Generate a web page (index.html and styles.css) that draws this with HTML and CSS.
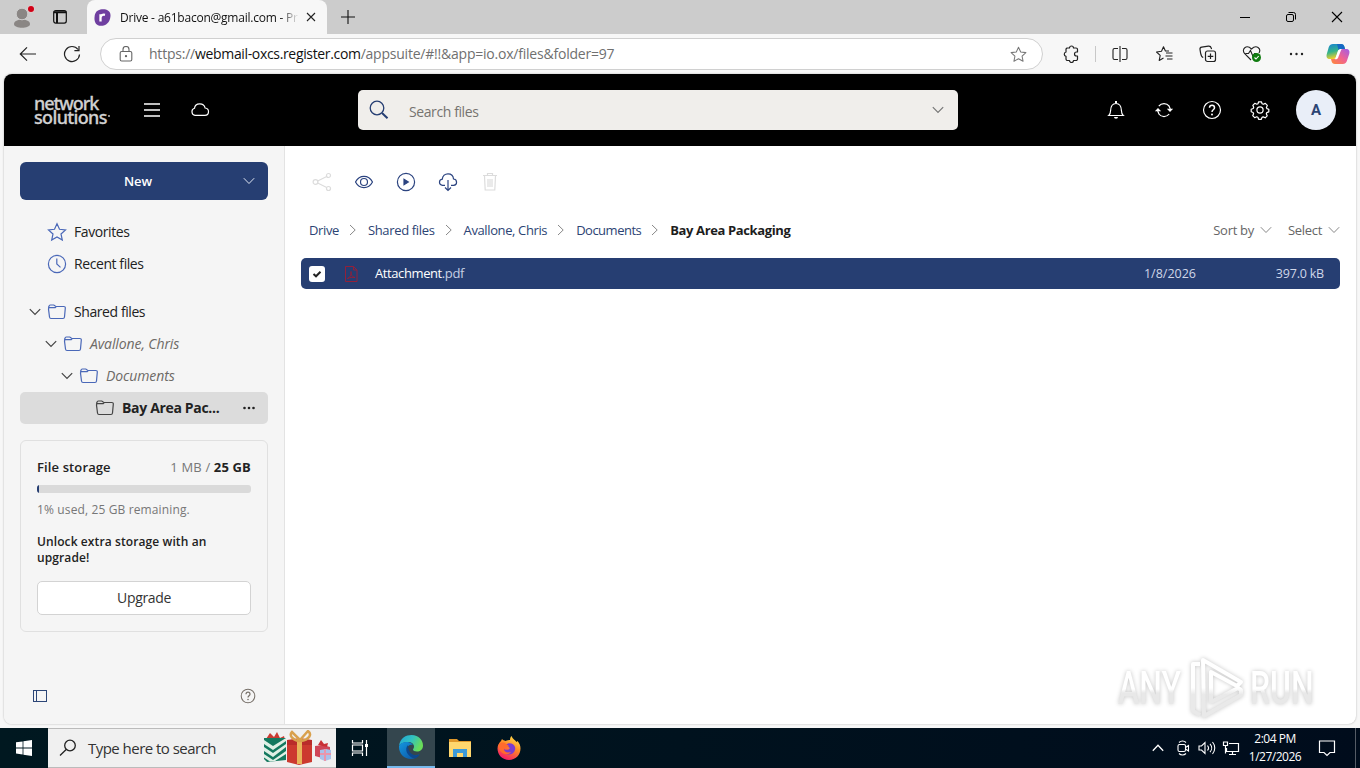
FILE: index.html
```html
<!DOCTYPE html>
<html lang="en">
<head>
<meta charset="utf-8">
<title>Drive</title>
<link rel="stylesheet" href="styles.css">
</head>
<body>
<svg class="defs" width="0" height="0">
  <symbol id="folder" viewBox="0 0 20 20"><path d="M1.500 6L2 4.200c.1-.8.600-1.200 1.300-1.200h3.500l2 1.500h8c1 0 1.600.7 1.500 1.600L17.500 15c-.1 1-.7 1.500-1.500 1.500H4c-.9 0-1.400-.5-1.500-1.500L1.500 7.200C1.400 6.200 1.900 5.700 2.700 5.700h5.500l1-1.200"/></symbol>
  <symbol id="down" viewBox="0 0 12 8"><path d="M.8 1.200L6 6.500l5.200-5.300"/></symbol>
  <symbol id="right" viewBox="0 0 8 12"><path d="M1 1l5.200 5L1 11"/></symbol>
</svg>
<div class="tabstrip">
  <svg class="profile" width="34" height="34" viewBox="0 0 34 34"><path d="M8 24c0-6 16-6 16 0 0 5-16 5-16 0z" fill="#8a8684"/><circle cx="16" cy="14" r="5.800" fill="#8a8684" stroke="#ccc"/><circle cx="25" cy="9" r="3.6" fill="#e9c9c9"/><circle cx="25" cy="9" r="3" fill="#d00016"/></svg>
  <svg class="workspaces" width="14" height="14" viewBox="0 0 14 14" fill="none" stroke="#111" stroke-width="1.2"><rect x=".7" y=".7" width="12.6" height="12.4" rx="2"/><path d="M.7 2.3h12.6M4 3v10" stroke-width="2"/></svg>
  <div class="tab">
    <svg width="17" height="17" viewBox="0 0 17 17"><path d="M4 1.5C8-.8 17-.4 16.500 7c-.4 6.500-4.500 9.800-9.500 9.800C2 16.800.2 13 .5 8.500.7 5 1.700 2.700 4 1.500z" fill="#6f3fa0"/><path d="M6.500 12.500V5.200M6.500 8.500C7 6.200 8.700 5.200 11 5.800" fill="none" stroke="#fff" stroke-width="2.300"/></svg>
    <span class="tab-title">Drive - a61bacon@gmail.com - Pr</span>
    <svg width="10" height="10" viewBox="0 0 10 10" fill="none" stroke="#222" stroke-width="1.100"><path d="M1 1l8 8M9 1L1 9"/></svg>
  </div>
  <svg class="newtab" width="14" height="14" viewBox="0 0 14 14" stroke="#111" stroke-width="1.100"><path d="M7 0v14M0 7h14"/></svg>
  <div class="window-buttons">
    <svg width="12" height="12" viewBox="0 0 12 12" stroke="#000"><path d="M1 6.500h10"/></svg>
    <svg width="12" height="12" viewBox="0 0 12 12" fill="none" stroke="#000"><rect x="1.500" y="3.500" width="7" height="7" rx="1.500"/><path d="M3.500 1.500H8.500a2 2 0 0 1 2 2V8.500"/></svg>
    <svg width="12" height="12" viewBox="0 0 12 12" stroke="#000" stroke-width="1.100"><path d="M1 1l10 10M11 1L1 11"/></svg>
  </div>
</div>

<div class="toolbar">
  <svg class="back" width="18" height="16" viewBox="0 0 18 16" fill="none" stroke="#222" stroke-width="1.200"><path d="M17 8H1.500M8 1.300L1.300 8 8 14.700"/></svg>
  <svg class="reload" width="18" height="18" viewBox="0 0 18 18" fill="none" stroke="#222" stroke-width="1.200"><path d="M16.500 9.500A7.500 7.500 0 1 1 15 4.500M16 1v4.600h-4.600"/></svg>
  <div class="address">
    <svg width="14" height="16" viewBox="0 0 14 16" fill="none" stroke="#666" stroke-width="1.100"><rect x="1.200" y="5.500" width="11.600" height="9.500" rx="1.500"/><path d="M4 5.500V3.500a3 3 0 0 1 6 0v2"/><circle cx="7" cy="10.200" r=".6" fill="#666"/></svg>
    <span class="url">https://<b>webmail-oxcs.register.com</b>/appsuite/#!!&amp;app=io.ox/files&amp;folder=97</span>
    <svg class="fav" width="17" height="17" viewBox="0 0 20 20" fill="none" stroke="#777" stroke-width="1.200" stroke-linejoin="round"><path d="M10 1.500l2.600 5.600 6.100.7-4.500 4.200 1.200 6L10 15l-5.400 3 1.200-6L1.300 7.800l6.100-.7z"/></svg>
  </div>
  <div class="browser-actions">
    <svg width="18" height="18" viewBox="0 0 18 18" fill="none" stroke="#222" stroke-width="1.200" stroke-linejoin="round"><path d="M5 3h2.500a2 2 0 0 1 4 0H14a1.500 1.500 0 0 1 1.500 1.500V7h-1a1.900 1.900 0 0 0 0 4h1v3a1.500 1.500 0 0 1-1.500 1.500h-2.500a2 2 0 0 1-4 0H5.500A1.500 1.500 0 0 1 4 14v-2.700a2.200 2.200 0 0 1 0-4.300V4z"/></svg>
    <i class="divider"></i>
    <svg width="18" height="18" viewBox="0 0 18 18" fill="none" stroke="#222" stroke-width="1.100"><path d="M7 3.500H3.500a1.500 1.500 0 0 0-1.500 1.500v8a1.500 1.500 0 0 0 1.500 1.500H7M11 3.500h3.500A1.500 1.500 0 0 1 16 5v8a1.500 1.500 0 0 1-1.500 1.500H11M9 1v16"/></svg>
    <svg width="18" height="18" viewBox="0 0 18 18" fill="none" stroke="#222" stroke-width="1.100" stroke-linejoin="round"><path d="M14 6h-3.600L8.500 1.800 6.500 6.200 1.500 7l3.700 3.400-1 5 4.300-2.400M11 8h6.500M10.500 11h7M12 14h5.500"/></svg>
    <svg width="18" height="18" viewBox="0 0 18 18" fill="none" stroke="#222" stroke-width="1.200"><rect x="6.500" y="6" width="10" height="10.500" rx="2"/><path d="M11.500 8.500v5.500M8.700 11.300h5.600M4.200 12.500C2.500 12 2 10.500 1.600 8.200L1 4.300C.8 3 1.500 2.300 2.700 2.100l6.600-.9c1.500-.2 2.600.5 3 2l.2 1"/></svg>
    <svg width="20" height="18" viewBox="0 0 20 18" fill="none" stroke="#222" stroke-width="1.100"><path d="M9 15L2.500 8.500C-1 4 4.500-1 9.500 4 14.500-1 19.500 3.500 17 8M3.500 8.500h3l2-3 2.500 6 1.500-3h2"/><circle cx="14.500" cy="12.500" r="4.500" fill="#107c10" stroke="none"/><path d="M12.500 12.500l1.500 1.500 2.700-3" stroke="#fff"/></svg>
    <svg width="18" height="18" viewBox="0 0 18 18" fill="#222"><circle cx="4" cy="9" r="1.200"/><circle cx="9.500" cy="9" r="1.200"/><circle cx="15" cy="9" r="1.200"/></svg>
    <svg width="24" height="24" viewBox="0 0 24 24"><defs><linearGradient id="ca" x1="0" y1="0" x2=".3" y2="1"><stop stop-color="#1681d5"/><stop offset=".55" stop-color="#35b489"/><stop offset="1" stop-color="#f4cf29"/></linearGradient><linearGradient id="cb" x1="1" y1="0" x2="0" y2="1"><stop stop-color="#a05ce8"/><stop offset=".5" stop-color="#f06292"/><stop offset="1" stop-color="#ff8b35"/></linearGradient></defs><path d="M7 2h8c2 0 3 1 3.500 3l.5 2h-4c-2 0-3 1-3.500 3l-1.500 5c-.5 1.500-1.500 2-3 2H4c-3 0-4-2-3.200-5l2-7C3.500 3 5 2 7 2z" fill="url(#ca)"/><path d="M17 7h3c3 0 4 2 3.200 5l-2 6c-.7 2.500-2 4-4.500 4H9c-2 0-3-1-3.500-3L5 17h3c2 0 3-1 3.500-3l1.500-4c.5-2 2-3 4-3z" fill="url(#cb)"/><path d="M11 2h4c2 0 3 1 3.500 3l.5 2h-4c-1 0-2 .4-2.500 1z" fill="#1668c5"/><path d="M12.500 8.500c.7-1 1.500-1.500 3-1.500L12 16c-.6 1-1.500 1.300-3 1.200z" fill="#fff"/></svg>
  </div>
</div>

<div class="app">
  <header class="appbar">
    <div class="brand"><span class="brand-a">network</span><span class="brand-b">solutions<i class="mark"></i></span></div>
    <svg class="menu" width="16" height="14" viewBox="0 0 16 14" stroke="#fff" stroke-width="1.300"><path d="M0 1h16M0 7h16M0 13h16"/></svg>
    <svg class="cloud" width="20" height="20" viewBox="0 0 20 20" fill="none" stroke="#fff" stroke-width="1.200"><path d="M5 15.300a3.600 3.600 0 0 1-.5-7C4.800 5.500 7 3.800 9.700 3.800c3 0 5 1.800 5.400 4.200 2 .2 3.400 1.800 3.400 3.700 0 2-1.600 3.600-3.800 3.600z"/></svg>
    <div class="search">
      <svg width="20" height="20" viewBox="0 0 20 20" fill="none" stroke="#263e72"><circle cx="8" cy="8" r="6.800" stroke-width="1.300"/><path d="M13 13l5.500 5.200" stroke-width="2"/></svg>
      <span>Search files</span>
      <svg width="12" height="8" fill="none" stroke="#777" stroke-width="1.200"><use href="#down"/></svg>
    </div>
    <div class="appbar-icons">
      <svg width="20" height="20" viewBox="0 0 20 20" fill="none" stroke="#fff" stroke-width="1.200"><path d="M2.800 15.500h14.400c-1.200-1-1.700-2.500-1.800-5-.2-4.500-2-7-5.400-7s-5.200 2.500-5.400 7c-.1 2.500-.6 4-1.800 5z"/><path d="M8 17h4a2 1.800 0 0 1-4 0z" fill="#fff" stroke="none"/><path d="M10 1v2" stroke-width="2"/></svg>
      <svg width="20" height="20" viewBox="0 0 20 20" fill="none" stroke="#fff" stroke-width="1.200"><path d="M4.800 6.200a6.600 6.600 0 0 1 10.400 0M15.200 14a6.600 6.600 0 0 1-10.400 0"/><path d="M12.800 8.800h6.400L16 12zM.8 11.200h6.400L4 8z" fill="#fff" stroke="none"/><path d="M15 6l1.300 3M5 14l-1.300-3"/></svg>
      <svg width="20" height="20" viewBox="0 0 20 20" fill="none" stroke="#fff" stroke-width="1.200"><circle cx="10" cy="10" r="8.500"/><path d="M7.500 7.800c.1-3.400 5-3.400 5 0 0 2-2.500 2-2.500 4.200" stroke-width="1.500"/><circle cx="10" cy="14.400" r="1" fill="#fff" stroke="none"/></svg>
      <svg width="20" height="20" viewBox="0 0 20 20" fill="none" stroke="#fff" stroke-width="1.200" stroke-linejoin="round"><circle cx="10" cy="10" r="3.100"/><path d="M8.600 1.800h2.800l.7 2 1.200.5 2-.9 2 2-.9 2 .5 1.200 1.900.7v2.600l-2 .7-.5 1.200.9 2-2 2-2-.9-1.200.5-.7 1.900H8.600l-.7-2-1.200-.5-2 .9-2-2 .9-2-.5-1.200-1.900-.7V9.200l2-.7.5-1.200-.9-2 2-2 2 .9 1.200-.5z"/></svg>
      <span class="avatar">A</span>
    </div>
  </header>
  <div class="body">
    <aside class="sidebar">
      <button class="new"><span>New</span><svg width="12" height="8" fill="none" stroke="#dfe5f2"><use href="#down"/></svg></button>
      <div class="tree">
        <div class="row lvl0"><svg class="ic" viewBox="0 0 20 20"><path d="M10 1.800l2.500 5.500 6 .6-4.500 4.100 1.300 6L10 14.900 4.700 18 6 12 1.500 7.900l6-.6z"/></svg><span>Favorites</span></div>
        <div class="row lvl0"><svg class="ic" viewBox="0 0 20 20"><circle cx="10" cy="10" r="8.600"/><path d="M9.800 4.500V10l3.700 3.400"/></svg><span>Recent files</span></div>
        <div class="row lvl0 gap"><svg class="tw"><use href="#down"/></svg><svg class="ic"><use href="#folder"/></svg><span>Shared files</span></div>
        <div class="row lvl1 it"><svg class="tw"><use href="#down"/></svg><svg class="ic"><use href="#folder"/></svg><span>Avallone, Chris</span></div>
        <div class="row lvl2 it"><svg class="tw"><use href="#down"/></svg><svg class="ic"><use href="#folder"/></svg><span>Documents</span></div>
        <div class="row lvl3 sel"><svg class="ic"><use href="#folder"/></svg><span>Bay Area Pac...</span><svg class="more" width="12" height="4" viewBox="0 0 12 4" fill="#222"><circle cx="1.500" cy="2" r="1.300"/><circle cx="6" cy="2" r="1.300"/><circle cx="10.500" cy="2" r="1.300"/></svg></div>
      </div>
      <section class="storage">
        <div class="storage-head"><b class="fs">File storage</b><span class="quota">1 MB / <b>25 GB</b></span></div>
        <div class="bar"><i></i></div>
        <p class="used">1% used, 25 GB remaining.</p>
        <p class="unlock">Unlock extra storage with an<br>upgrade!</p>
        <button class="upgrade"><span>Upgrade</span></button>
      </section>
      <div class="side-foot">
        <svg width="14" height="12" viewBox="0 0 14 12" fill="none" stroke="#2c4677"><rect x=".5" y=".5" width="13" height="11"/><path d="M3.500 0v12"/></svg>
        <svg width="16" height="16" viewBox="0 0 20 20" fill="none" stroke="#777069" stroke-width="1.300"><circle cx="10" cy="10" r="8.500"/><path d="M7.500 7.800c.1-3.400 5-3.400 5 0 0 2-2.500 2-2.500 4.200" stroke-width="1.500"/><circle cx="10" cy="14.400" r="1" fill="#777069" stroke="none"/></svg>
      </div>
    </aside>
    <main class="content">
      <div class="actions">
        <svg class="off" viewBox="0 0 20 20"><circle cx="3.500" cy="10" r="2.400"/><circle cx="16.500" cy="3.500" r="2"/><circle cx="16.500" cy="16.500" r="2"/><path d="M5.700 9l9-4.500M5.700 11l9 4.500"/></svg>
        <svg viewBox="0 0 20 20"><path d="M1.500 10C5.500 2.500 14.500 2.500 18.500 10c-4 7.500-13 7.500-17 0z"/><circle cx="10" cy="10" r="3.500"/></svg>
        <svg viewBox="0 0 20 20"><circle cx="10" cy="10" r="8.600"/><path d="M8 7.300l4.300 2.700L8 12.700z" fill="#2c4480"/></svg>
        <svg viewBox="0 0 20 20"><path d="M7 13.300H4.500C.5 13 .5 7.800 4.300 7.200 4.500 4 7 1.800 10 1.800s5.300 2 5.500 5.200c4 .4 4.200 6 0 6.300H13M10 8v10M7 15.500l3 3 3-3"/></svg>
        <svg class="off" viewBox="0 0 20 20"><path d="M3 3.500h14M7.500 3V1.500h5V3M4.500 4l.7 14h9.600l.7-14M8 7v8M12 7v8M10 7v8"/></svg>
      </div>
      <div class="pathbar">
        <nav class="crumbs">
          <span class="c1">Drive</span><svg><use href="#right"/></svg>
          <span class="c2">Shared files</span><svg><use href="#right"/></svg>
          <span class="c3">Avallone, Chris</span><svg><use href="#right"/></svg>
          <span class="c4">Documents</span><svg><use href="#right"/></svg>
          <b class="c5">Bay Area Packaging</b>
        </nav>
        <div class="sorts"><span class="sort">Sort by</span><svg><use href="#down"/></svg><span class="select">Select</span><svg><use href="#down"/></svg></div>
      </div>
      <div class="file">
        <svg class="check" width="16" height="16" viewBox="0 0 16 16"><rect width="16" height="16" rx="3" fill="#fff"/><path d="M4.500 8l2.500 2.300 4.500-4.600" fill="none" stroke="#222" stroke-width="2"/></svg>
        <svg class="pdf" width="14" height="16" viewBox="0 0 14 16" fill="none" stroke="#93203a"><path d="M1.500.5h8l3.500 3.500v11.500H1.500zM9.500.5V4H13"/><path d="M3.500 12.500c4-2 3.500-6 3.500-7 0 4 1 5 4 6-3-.5-5 0-7.500 1z"/></svg>
        <span class="fname">Attachment<span>.pdf</span></span>
        <span class="date">1/8/2026</span>
        <span class="size">397.0 kB</span>
      </div>
    </main>
  </div>
</div>

<div class="watermark">
  <span class="any">ANY</span>
  <svg width="60" height="66" viewBox="0 0 60 66" fill="none" stroke-linejoin="round"><defs><linearGradient id="wm" x1="0" y1="0" x2="0" y2="66" gradientUnits="userSpaceOnUse"><stop offset=".5" stop-color="#fff"/><stop offset=".6" stop-color="#e9e9e9"/></linearGradient></defs><g stroke="url(#wm)" stroke-width="4"><path d="M14 9H7v47l7 4"/><path d="M17 5l38 22-4 4-26-14v30l27-14 3 2v5L18 61z"/></g></svg>
  <span class="run">RUN</span>
</div>

<div class="taskbar">
  <div class="start"><svg width="16" height="16" viewBox="0 0 16 16" fill="#fff"><path d="M0 2.300l6.600-.9v6.100H0zM7.400 1.200L16 0v7.500H7.400zM0 8.400h6.600v6.100L0 13.600zM7.400 8.400H16V16l-8.600-1.300z"/></svg></div>
  <div class="tb-search">
    <svg width="18" height="18" viewBox="0 0 18 18" fill="none" stroke="#222" stroke-width="1.300"><circle cx="11" cy="6.500" r="5.300"/><path d="M7.200 10.500L1 16.500"/></svg>
    <span>Type here to search</span>
    <svg class="gifts" width="68" height="36" viewBox="0 0 68 36"><path d="M2 9l4-6 4 4 3-5 3 6 4-2 1 4z" fill="#c93b32"/><path d="M0 8h22v22L3 32 0 29z" fill="#14795f"/><path d="M0 10l9 6 13-8v3L9 20 0 14zM0 17l9 6 13-9v3L9 27l-9-6zM0 24l9 6 13-9v3l-11 7-5 .500-6-4z" fill="#dff0e5"/><path d="M23 10l13-2 12 2v22l-13 3-12-3z" fill="#cc392f"/><path d="M23 10h25v5H23z" fill="#b92c2a"/><path d="M33 9h5v25h-5z" fill="#e8b45a"/><path d="M35 11C28 10 25 5 28 2l8 8 8-9c4 3 2 9-8 10z" fill="none" stroke="#d9a14e" stroke-width="2.500"/><path d="M51 16l8-1 7 2v9l-8 2-7-2z" fill="#cf4658"/><path d="M54 15l3-5 3 4 4-1-1 4z" fill="#c92f35"/><path d="M56 20l6-1 5 1v9l-6 2-5-2z" fill="#a9c1ea"/><path d="M60 19h2v12h-2zM56 23h11v2H56z" fill="#e995ab"/></svg>
  </div>
  <div class="tb-app"><svg width="18" height="18" viewBox="0 0 18 18" fill="none" stroke="#fff" stroke-width="1.200"><path d="M1.500 1v3h10V1M1.500 17v-3h10v3M1.500 6h10v6h-10zM15.500 1v16"/><path d="M15.500 5v3" stroke-width="3"/></svg></div>
  <div class="tb-app active"><svg width="26" height="26" viewBox="0 0 26 26"><defs><linearGradient id="ea" x1="0" y1="0" x2="1" y2=".4"><stop stop-color="#1fa4d8"/><stop offset=".55" stop-color="#32c2c0"/><stop offset="1" stop-color="#69dd59"/></linearGradient><linearGradient id="eb" x1="0" y1="0" x2="1" y2="1"><stop stop-color="#1497df"/><stop offset="1" stop-color="#0b4fa0"/></linearGradient></defs><path d="M1 12C2 4 8 1 13.500 1 21 1 25 6.500 25 11.500c0 4-3 6-6 6-2.500 0-4-1-4-2 0-.7 1-1.200 1-3C16 10 13.500 8 10 8 5.500 8 2 10 1 12z" fill="url(#ea)"/><path d="M1 12c1.500-3 5-4.500 9-4 2.500.3 4 1.500 5 3-3-1-6 1-6 4.500 0 4.500 5 7 12 5-2 3-5 4.500-8 4.500C6 25 1 19.500 1 13z" fill="url(#eb)"/><path d="M10 11c-4 4-1 12 7 13.500 2-.7 4-2.500 5-4.200-4 2-12 1-12-9.300z" fill="#0d478d"/></svg></div>
  <div class="tb-app"><svg width="22" height="20" viewBox="0 0 22 20"><path d="M0 1h8l2 2h12v5H0z" fill="#e0982a"/><path d="M0 4h22v15H0z" fill="#ffd76e"/><path d="M4 19v-8h14v8h-4v-4H8v4z" fill="#3c9ad9"/></svg></div>
  <div class="tb-app"><svg width="24" height="24" viewBox="0 0 24 24"><defs><linearGradient id="fa" x1=".8" y1="0" x2=".3" y2="1"><stop stop-color="#ffe34c"/><stop offset=".45" stop-color="#ff8a25"/><stop offset="1" stop-color="#f5156c"/></linearGradient></defs><path d="M4 5l1-2c1 1 2 1.500 3.500 2C10 4 12 4 13 4c0-2 .5-3 1.500-4 1 3 4 4 5 6l1-1c2 2 3 5 3 7.500C23.500 19 18.500 24 12 24S.5 19 .5 12.500C.5 9.500 2 7 4 5z" fill="url(#fa)"/><path d="M9 9c2-3 8-2 9 2s-2 7.500-6 7.500S6 15 7 13c2 1.500 5 1 6-1-1-1-2-1-4-3z" fill="#7b3ccf"/><path d="M1 10c1-3 5-5 8-2l3 2c-1 2-4 1-5 3 0 3 3 4 7 3-2 4-11 3-13-6z" fill="#ff6b2d"/></svg></div>
  <div class="tray">
    <svg width="12" height="18" viewBox="0 0 12 18" fill="none" stroke="#fff" stroke-width="1.300"><path d="M.8 11.800L6 6.300l5.200 5.500"/></svg>
    <svg width="14" height="18" viewBox="0 0 14 18" fill="none" stroke="#fff" stroke-width="1.100"><rect x="2" y="5.500" width="7.500" height="7" rx="1.500"/><path d="M9.500 8.500l3-2v5.500l-3-2M3 3.500c2-2 5-2 7 0M3 14.500c2 2 5 2 7 0"/></svg>
    <svg width="18" height="18" viewBox="0 0 18 18" fill="none" stroke="#fff" stroke-width="1.100"><path d="M1 7v4h2.500L7 14.500v-11L3.500 7zM9.500 6.500c1.300 1.500 1.300 3.500 0 5M12 4.800c2.200 2.500 2.200 6 0 8.400M14.500 3c3 3.500 3 8.500 0 12"/></svg>
    <svg width="18" height="18" viewBox="0 0 18 18" fill="none" stroke="#fff" stroke-width="1.200"><path d="M7 4.500h9.500v8H4.500V9M10.500 12.500v3M7 15.500h7M1.500 3h4v3.500h-4zM3.500 6.500v8"/></svg>
    <div class="clock"><span class="time">2:04 PM</span><span class="day">1/27/2026</span></div>
    <svg class="note" width="18" height="18" viewBox="0 0 18 18" fill="none" stroke="#fff" stroke-width="1.200"><path d="M1.500 2h15v11.500H12L9 16.500l-3-3H1.500z"/></svg>
    <i class="peek"></i>
  </div>
</div>
</body>
</html>
```
FILE: styles.css
```css
* { box-sizing: border-box; }
body { margin: 0; width: 1360px; height: 768px; overflow: hidden; background: #f7f7f7; font-family: "Open Sans", "Noto Sans", sans-serif; font-size: 13px; color: #222; display: flex; flex-direction: column; position: relative; }
svg { display: block; flex: none; }
.defs { position: absolute; }
button { font: inherit; border: 0; padding: 0; }
p { margin: 0; }
span, b { white-space: nowrap; }

.tabstrip { height: 34px; flex: none; background: #ccc; display: flex; align-items: center; }
.profile { margin-left: 6px; }
.workspaces { margin-left: 13px; }
.tab { margin-left: 20px; width: 240px; height: 34px; background: #f7f7f7; border-radius: 8px 8px 0 0; display: flex; align-items: center; padding: 0 11px 0 7px; }
.tab-title { margin-left: 9px; width: 179px; font-size: 12px; letter-spacing: -.23px; color: #111; margin-right: 8px; -webkit-mask-image: linear-gradient(90deg, #000 160px, transparent 179px); mask-image: linear-gradient(90deg, #000 160px, transparent 179px); }
.newtab { margin-left: 14px; }
.window-buttons { margin-left: auto; display: flex; gap: 34px; padding-right: 17px; }

.toolbar { height: 40px; flex: none; display: flex; align-items: center; }
.back { margin-left: 19px; }
.reload { margin-left: 26px; }
.address { margin-left: 19px; width: 943px; height: 32px; border: 1px solid #d0d0d0; border-radius: 16px; background: #fff; display: flex; align-items: center; padding: 0 15px 0 18px; }
.url { margin-left: 16px; font-size: 14px; letter-spacing: -.22px; color: #707070; padding-bottom: 1px; }
.url b { font-weight: 400; color: #111; letter-spacing: -.34px; }
.fav { margin-left: auto; }
.browser-actions { margin-left: 19px; display: flex; align-items: center; }
.browser-actions svg:nth-of-type(n+3) { margin-left: 26px; }
.browser-actions svg:nth-of-type(6) { margin-left: 25px; }
.browser-actions svg:nth-of-type(5) { margin-left: 25px; }
.browser-actions svg:nth-of-type(7) { margin-left: 21px; }
.divider { width: 1px; height: 16px; background: #c8c8c8; margin: 0 15px; }

.app { margin: 0 4px; height: 650px; flex: none; border-radius: 8px; overflow: hidden; background: #fff; box-shadow: 0 0 2px #aaa; display: flex; flex-direction: column; }
.appbar { height: 72px; flex: none; background: #000; display: flex; align-items: center; }
.brand { margin-left: 30px; width: 79px; display: flex; flex-direction: column; color: #d0d0d0; font-family: "Noto Sans", sans-serif; font-size: 18px; line-height: 14px; font-weight: 500; padding-bottom: 1px; -webkit-text-stroke: .3px #d0d0d0; }
.brand-a { letter-spacing: -1.05px; }
.brand-b { letter-spacing: -.65px; }
.mark { display: inline-block; width: 2px; height: 2px; margin-left: 1px; border-radius: 1px; background: #bbb; vertical-align: 7px; }
.menu { margin-left: 31px; }
.cloud { margin-left: 30px; }
.search { margin-left: 148px; width: 600px; height: 40px; border-radius: 5px; background: #f0eeeb; display: flex; align-items: center; padding: 0 14px 0 11px; color: #76736f; font-size: 14px; letter-spacing: -.4px; }
.search span { flex: 1; margin-left: 20px; padding-top: 3px; }
.appbar-icons { margin-left: auto; margin-right: 20px; display: flex; align-items: center; gap: 28px; }
.avatar { width: 40px; height: 40px; margin-left: -2px; border-radius: 50%; background: #e9eef8; color: #2c4474; font: bold 15px/40px Roboto, sans-serif; text-align: center; }

.body { flex: 1; display: flex; min-height: 0; }
.sidebar { width: 281px; background: #f5f5f5; border-right: 1px solid #e3e3e3; padding: 16px 16px 0; display: flex; flex-direction: column; }
.new { height: 38px; flex: none; background: #263e72; color: #fff; border-radius: 6px; display: flex; align-items: center; padding: 0 13px; font-size: 13px; font-weight: 600; }
.new span { flex: 1; text-align: center; letter-spacing: -.1px; }
.tree { margin-top: 16px; font-size: 14px; letter-spacing: -.42px; }
.row { height: 32px; display: flex; align-items: center; border-radius: 5px; }
.gap { margin-top: 16px; }
.row span { margin-left: 7px; padding-bottom: 1px; }
.ic { width: 20px; height: 20px; fill: none; stroke: #4a68b8; stroke-width: 1.200; }
.tw { width: 12px; height: 8px; fill: none; stroke: #444; stroke-width: 1.200; margin-right: 6px; }
.lvl0 { padding-left: 27px; }
.gap { padding-left: 9px; }
.lvl1 { padding-left: 25px; }
.lvl2 { padding-left: 41px; }
.lvl3 { padding-left: 75px; }
.it span { font-style: italic; color: #6d6a66; letter-spacing: -.1px; }
.sel { background: #dcdcdc; font-weight: 700; padding-right: 13px; letter-spacing: -.33px; }
.more { margin-left: auto; }
.sel .ic { stroke: #444; }
.storage { margin-top: 16px; height: 192px; border: 1px solid #e0e0e0; border-radius: 6px; padding: 16px; display: flex; flex-direction: column; }
.storage-head { height: 20px; flex: none; display: flex; justify-content: space-between; align-items: center; font-size: 13px; letter-spacing: .12px; }
.fs, .unlock { font-weight: 600; }
.quota { color: #777; font-size: 13px; letter-spacing: .15px; }
.quota b { color: #222; }
.bar { margin-top: 8px; height: 8px; flex: none; border-radius: 3px; background: #dadada; overflow: hidden; }
.bar i { display: block; width: 2px; height: 8px; background: #263e72; }
.used { margin-top: 8px; line-height: 18px; font-size: 12px; letter-spacing: .13px; color: #777; }
.unlock { margin-top: 15px; font-size: 12px; line-height: 16px; letter-spacing: .1px; }
.upgrade { margin-top: 15px; height: 34px; flex: none; background: #fff; border: 1px solid #d3d3d3; border-radius: 5px; color: #333; font-size: 14px; letter-spacing: -.35px; padding-bottom: 1px; }
.side-foot { margin-top: 56px; display: flex; justify-content: space-between; align-items: center; padding: 0 12px 0 13px; }

.content { flex: 1; padding: 26px 16px 0; }
.actions { display: flex; gap: 22px; padding-left: 11px; }
.actions svg { width: 20px; height: 20px; fill: none; stroke: #2c4480; stroke-width: 1.200; }
.actions .off { stroke: #dcdcdc; }
.pathbar { margin-top: 26px; height: 24px; display: flex; align-items: center; justify-content: space-between; font-size: 13px; letter-spacing: -.3px; }
.crumbs { display: flex; align-items: center; padding-left: 8px; color: #2c4474; letter-spacing: -.38px; }
.crumbs svg { width: 8px; height: 12px; margin: 0 11px 0 10px; fill: none; stroke: #888; }
.crumbs .c2 { letter-spacing: -.34px; }
.crumbs .c4 { letter-spacing: -.5px; }
.crumbs b { color: #1d1d1d; }
.sorts { display: flex; align-items: center; color: #666; }
.sorts svg { width: 12px; height: 8px; margin-left: 6px; fill: none; stroke: #888; }
.select { margin-left: 16px; }
.file { margin-top: 16px; height: 31px; border-radius: 5px; background: #263e72; color: #fff; display: flex; align-items: center; padding: 0 16px 0 8px; font-size: 13px; letter-spacing: -.3px; }
.file > span { padding-bottom: 1px; }
.pdf { margin-left: 19px; }
.fname { margin-left: 17px; flex: 1; letter-spacing: -.4px; }
.fname span { color: #c7d0e4; }
.date, .size { color: #d0d7e8; font-size: 12.500px; letter-spacing: -.2px; }
.date { letter-spacing: 0; }
.size { width: 128px; text-align: right; }

.watermark { position: absolute; left: 1118px; top: 655px; width: 196px; height: 66px; display: flex; align-items: center; justify-content: space-between; filter: drop-shadow(0 0 2px #c4c4c4); }
.watermark span { width: 64px; font: 500 47px/50px Roboto, sans-serif; color: transparent; transform: scaleX(.68); transform-origin: 0 50%; background: linear-gradient(#fff 52%, #e8e8e8 60%); -webkit-background-clip: text; background-clip: text; padding-right: 36px; box-sizing: content-box; margin-right: -36px; }

.taskbar { margin-top: 4px; height: 40px; flex: none; background: linear-gradient(90deg, #001820, #000c1c); display: flex; }
.start { width: 48px; display: flex; align-items: center; justify-content: center; }
.tb-search { width: 288px; background: #f0f0f0; border: 1px solid #bbb; border-width: 1px 0; display: flex; align-items: center; padding: 0 4px 0 11px; font-size: 15px; letter-spacing: -.53px; color: #333; }
.tb-search span { margin-left: 11px; }
.gifts { margin-left: auto; }
.tb-app { width: 48px; display: flex; align-items: center; justify-content: center; margin-right: 1px; }
.active { background: #34464e; border-bottom: 2px solid #76b9ed; margin-left: 2px; }
.tray { margin-left: auto; display: flex; align-items: center; color: #fff; font-size: 12px; }
.tray svg:nth-of-type(2) { margin-left: 12px; }
.tray svg:nth-of-type(3) { margin-left: 8px; }
.tray svg:nth-of-type(4) { margin-left: 6px; }
.clock { margin-left: 5px; width: 60px; display: flex; flex-direction: column; align-items: center; line-height: 18px; letter-spacing: -.5px; }
.tray .note { margin-left: 13px; }
.peek { margin-left: 19px; width: 1px; height: 40px; background: #555c66; margin-right: 4px; }
```
